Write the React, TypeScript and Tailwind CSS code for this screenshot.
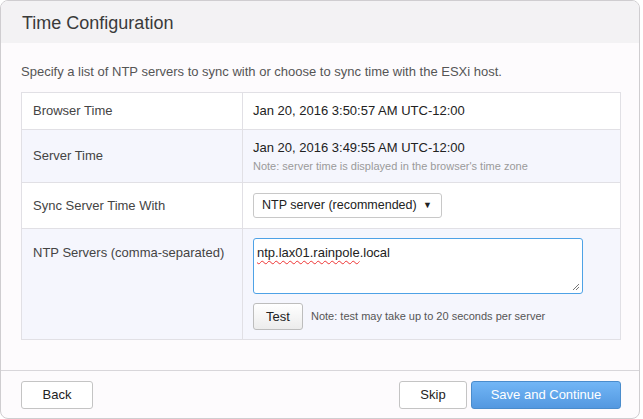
export default function App() {
  return (
    <div className="w-[643px] h-[419px] bg-white font-['Liberation_Sans',Arial,sans-serif] text-[#333]">
      <div className="w-[640px] h-[419px] rounded-[8px] border border-[#cfcdd0] bg-[#fdfbfd] overflow-hidden flex flex-col">
        <div className="h-[42px] bg-[#f3f2f4] flex items-center px-[21px]">
          <h1 className="text-[18px] text-[#3a3a3a] pt-[2px]">Time Configuration</h1>
        </div>
        <div className="flex-1 px-[20px] pt-[21px]">
          <p className="text-[13px] leading-[16px] text-[#555]">
            Specify a list of NTP servers to sync with or choose to sync time with the ESXi host.
          </p>
          <div className="mt-[12px] w-[600px] border border-[#e1e0e5] text-[13px]">
            <div className="flex h-[37px] bg-white border-b border-[#e1e0e5]">
              <div className="w-[221px] border-r border-[#e1e0e5] pl-[11px] flex items-center text-[#444]">Browser Time</div>
              <div className="flex-1 pl-[10px] flex items-center text-[#222]">Jan 20, 2016 3:50:57 AM UTC-12:00</div>
            </div>
            <div className="flex h-[53px] bg-[#f5f6fd] border-b border-[#e1e0e5]">
              <div className="w-[221px] border-r border-[#e1e0e5] pl-[11px] flex items-center text-[#444]">Server Time</div>
              <div className="flex-1 pl-[10px] flex flex-col justify-center">
                <span className="text-[#222] leading-[16px]">Jan 20, 2016 3:49:55 AM UTC-12:00</span>
                <span className="text-[11px] leading-[14px] text-[#9a9a9a] mt-[3px]">Note: server time is displayed in the browser's time zone</span>
              </div>
            </div>
            <div className="flex h-[46px] bg-white border-b border-[#e1e0e5]">
              <div className="w-[221px] border-r border-[#e1e0e5] pl-[11px] flex items-center text-[#444]">Sync Server Time With</div>
              <div className="flex-1 pl-[10px] flex items-center">
                <div className="w-[189px] h-[25px] rounded-[3px] border border-[#c8c8c8] bg-white flex items-center pl-[8px] pr-[9px] text-[12.5px] text-[#222]">
                  <span>NTP server (recommended)</span>
                  <span className="ml-auto text-[9px]">▼</span>
                </div>
              </div>
            </div>
            <div className="flex h-[110px] bg-[#f5f6fd]">
              <div className="w-[221px] border-r border-[#e1e0e5] pl-[11px] pt-[14px] text-[#444]">NTP Servers (comma-separated)</div>
              <div className="flex-1 pl-[10px] pt-[9px]">
                <div className="relative w-[330px] h-[56px] rounded-[3px] border border-[#4ea2e6] bg-white px-[3px] pt-[4px] text-[#222]">
                  <span className="underline decoration-wavy decoration-[#e33] decoration-1 underline-offset-[3px]">ntp.lax01.rainpole</span>.local
                  <svg className="absolute right-[2px] bottom-[2px]" width="8" height="8" viewBox="0 0 8 8">
                    <path d="M7 1L1 7M7 4L4 7" stroke="#777" strokeWidth="1" />
                  </svg>
                </div>
                <div className="flex items-center mt-[9px]">
                  <button className="w-[50px] h-[27px] rounded-[3px] border border-[#bdbdbd] bg-gradient-to-b from-white to-[#ececec] text-[13px] text-[#222]">Test</button>
                  <span className="ml-[8px] text-[11px] text-[#555]">Note: test may take up to 20 seconds per server</span>
                </div>
              </div>
            </div>
          </div>
        </div>
        <div className="h-[48px] border-t border-[#d8d6da] flex items-start pt-[10px] pl-[20px] pr-[18px]">
          <button className="w-[72px] h-[28px] rounded-[3px] border border-[#c4c4c4] bg-white text-[13px] text-[#222]">Back</button>
          <div className="ml-auto flex gap-[4px]">
            <button className="w-[68px] h-[28px] rounded-[3px] border border-[#c4c4c4] bg-white text-[13px] text-[#222]">Skip</button>
            <button className="w-[150px] h-[28px] rounded-[3px] border border-[#4a8ccc] bg-gradient-to-b from-[#72b6f6] to-[#5398e0] text-[13px] text-white">Save and Continue</button>
          </div>
        </div>
      </div>
    </div>
  )
}
